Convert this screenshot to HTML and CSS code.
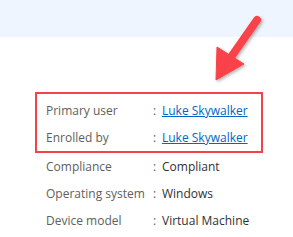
FILE: index.html
```html
<!DOCTYPE html>
<html>
<head>
<meta charset="utf-8">
<link rel="stylesheet" href="styles.css">
</head>
<body>
<div class="band"></div>
<div class="content">
  <div class="highlight">
    <div class="row"><span class="label">Primary user</span><span class="colon">:</span><a class="link" href="#">Luke Skywalker</a></div>
    <div class="row"><span class="label">Enrolled by</span><span class="colon">:</span><a class="link" href="#">Luke Skywalker</a></div>
  </div>
  <div class="plain">
    <div class="row"><span class="label">Compliance</span><span class="colon">:</span><span class="value">Compliant</span></div>
    <div class="row"><span class="label">Operating system</span><span class="colon">:</span><span class="value">Windows</span></div>
    <div class="row"><span class="label">Device model</span><span class="colon">:</span><span class="value">Virtual Machine</span></div>
  </div>
</div>
<svg class="arrow" width="293" height="237" viewBox="0 0 293 237">
  <defs>
    <filter id="sh" x="-50%" y="-50%" width="200%" height="200%">
      <feDropShadow dx="1.5" dy="1.5" stdDeviation="1.5" flood-color="#000" flood-opacity="0.3"/>
    </filter>
  </defs>
  <g filter="url(#sh)" fill="#f9434a" stroke="#f9434a">
    <line x1="257" y1="20" x2="229" y2="60" stroke-width="8" stroke-linecap="round"/>
    <polygon points="216,80 217,47 244,64" stroke-width="1" stroke-linejoin="round"/>
  </g>
</svg>
</body>
</html>
```
FILE: styles.css
```css
html, body {
  margin: 0;
  padding: 0;
  background: #ffffff;
  width: 293px;
  height: 237px;
  overflow: hidden;
  font-family: "Open Sans", "Noto Sans", sans-serif;
  font-size: 12px;
}
.band {
  height: 37px;
  background: #eef5fe;
}
.content {
  padding: 55px 0 0 35px;
}
.highlight {
  box-sizing: border-box;
  width: 228px;
  height: 61px;
  border: 2px solid #f4414a;
  padding: 3px 0 0 9px;
}
.plain {
  padding-left: 11px;
}
.row {
  display: flex;
  height: 27px;
  line-height: 27px;
  white-space: nowrap;
}
.label {
  width: 107px;
  color: #605e5c;
}
.colon {
  width: 9px;
  color: #605e5c;
}
.value {
  color: #323130;
}
.link {
  color: #0066c4;
  text-decoration: underline;
}
.arrow {
  position: absolute;
  left: 0;
  top: 0;
}
```
